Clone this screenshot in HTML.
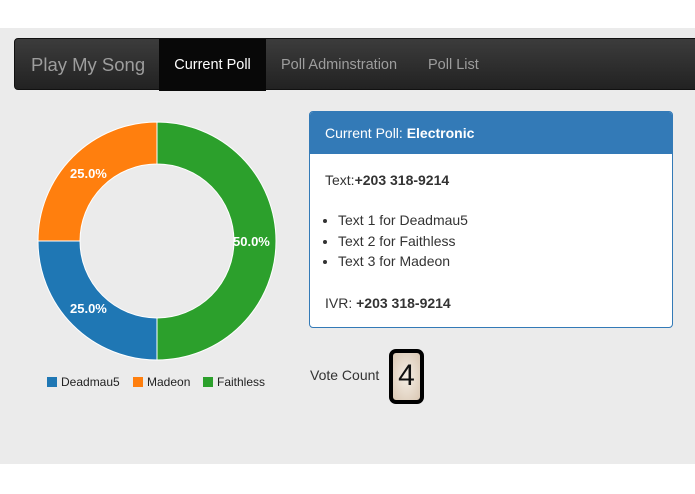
<!DOCTYPE html>
<html><head><style>
body{margin:0;width:695px;height:494px;background:#fff;font-family:"Liberation Sans",sans-serif;position:relative;overflow:hidden}
.bg{position:absolute;left:0;top:28px;width:695px;height:436px;background:#ebebeb}
.nav{position:absolute;left:14px;top:38px;width:690px;height:52px;background:linear-gradient(#3c3c3c,#222);border-radius:4px;border:1px solid #111;box-sizing:border-box}
.nav span{position:absolute;top:0;line-height:52px;font-size:14.5px;color:#9d9d9d}
.brand{font-size:18.5px!important;left:16px}
.act{left:144px;width:107px;background:#080808;color:#fff!important;text-align:center}
.panel{position:absolute;left:309px;top:111px;width:364px;height:217px;border:1px solid #337ab7;border-radius:4px;background:#fff;box-sizing:border-box;overflow:hidden;font-size:14px;color:#333}
.ph{background:#337ab7;color:#fff;height:42px;line-height:42px;padding-left:15px;font-size:14px}
ul{margin:0;padding-left:28px;line-height:20.5px}
.vc{position:absolute;left:310px;top:367px;font-size:14px;color:#333}
.box{position:absolute;left:389px;top:349px;width:35px;height:55px;border:4px solid #000;border-radius:7px;box-sizing:border-box;background:radial-gradient(#f5eee5,#d9c7b3);font-size:30px;text-align:center;line-height:46px;color:#111}
.leg{position:absolute;top:375px;font-size:12px;color:#222}
.leg i{display:inline-block;width:10px;height:10px;margin-right:4px;vertical-align:-1px}
</style></head><body>
<div class="bg"></div>
<div class="nav"><span class="brand">Play My Song</span><span class="act">Current Poll</span><span style="left:266px">Poll Adminstration</span><span style="left:413px">Poll List</span></div>
<svg style="position:absolute;left:0;top:0" width="320" height="370">
<g stroke="#fff" stroke-width="1">
<path d="M157,122 A119,119 0 0 1 157,360 L157,318 A77,77 0 0 0 157,164 Z" fill="#2ca02c"/>
<path d="M157,360 A119,119 0 0 1 38,241 L80,241 A77,77 0 0 0 157,318 Z" fill="#1f77b4"/>
<path d="M38,241 A119,119 0 0 1 157,122 L157,164 A77,77 0 0 0 80,241 Z" fill="#ff7f0e"/>
</g>
<g fill="#fff" font-size="13" font-weight="bold" font-family="Liberation Sans">
<text x="70" y="178">25.0%</text><text x="233" y="246">50.0%</text><text x="70" y="313">25.0%</text></g>
</svg>
<div class="leg" style="left:47px"><i style="background:#1f77b4"></i>Deadmau5</div>
<div class="leg" style="left:133px"><i style="background:#ff7f0e"></i>Madeon</div>
<div class="leg" style="left:203px"><i style="background:#2ca02c"></i>Faithless</div>
<div class="panel"><div class="ph">Current Poll: <b>Electronic</b></div>
<div style="padding:18px 15px 0">Text:<b>+203 318-9214</b></div>
<ul style="margin-top:22px"><li>Text 1 for Deadmau5</li><li>Text 2 for Faithless</li><li>Text 3 for Madeon</li></ul>
<div style="padding:23px 15px 0">IVR: <b>+203 318-9214</b></div></div>
<div class="vc">Vote Count</div>
<div class="box">4</div>
</body></html>
